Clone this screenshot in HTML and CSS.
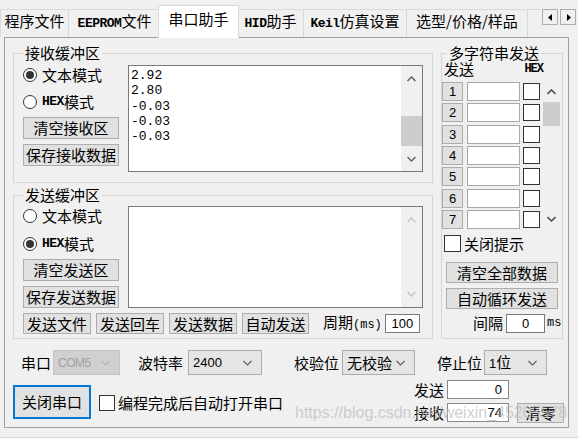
FILE: index.html
```html
<!DOCTYPE html>
<html lang="zh">
<head>
<meta charset="utf-8">
<title>串口助手</title>
<link rel="stylesheet" href="styles.css">
</head>
<body>
<div class="tabstrip">
  <div class="tablist">
    <div class="tab w1">程序文件</div>
    <div class="tab w2"><span class="bm">EEPROM</span>文件</div>
    <div class="tab active w3">串口助手</div>
    <div class="tab w4"><span class="bm">HID</span>助手</div>
    <div class="tab w5"><span class="bm">Keil</span>仿真设置</div>
    <div class="tab w6">选型/价格/样品</div>
    <div class="tab w7">兴趣</div>
  </div>
  <div class="tab-arrows">
    <span class="arr"><svg width="5" height="7" viewBox="0 0 5 7"><polygon points="4,0 4,7 0,3.5" fill="#000"/></svg></span>
    <span class="arr"><svg width="5" height="7" viewBox="0 0 5 7"><polygon points="1,0 1,7 5,3.5" fill="#000"/></svg></span>
  </div>
</div>

<div class="panel">
  <div class="groups">
    <div class="leftcol">
      <fieldset class="grp recv">
        <legend>接收缓冲区</legend>
        <div class="gbody">
          <div class="ctrls">
            <div class="radio on r1"><i></i>文本模式</div>
            <div class="radio r2"><i></i><span class="bm">HEX</span>模式</div>
            <div class="btn side">清空接收区</div>
            <div class="btn side">保存接收数据</div>
          </div>
          <div class="tbox recvbox">
            <div class="ttext">2.92<br>2.80<br>-0.03<br>-0.03<br>-0.03</div>
            <div class="sb">
              <div class="sb-arr"><svg width="9" height="6" viewBox="0 0 9 6"><polyline points="0.5,5 4.5,1 8.5,5" fill="none" stroke="#606060" stroke-width="1.5"/></svg></div>
              <div class="sb-track"><div class="thumb recv-thumb"></div></div>
              <div class="sb-arr"><svg width="9" height="6" viewBox="0 0 9 6"><polyline points="0.5,1 4.5,5 8.5,1" fill="none" stroke="#606060" stroke-width="1.5"/></svg></div>
            </div>
          </div>
        </div>
      </fieldset>

      <fieldset class="grp send">
        <legend>发送缓冲区</legend>
        <div class="gbody">
          <div class="ctrls">
            <div class="radio r1"><i></i>文本模式</div>
            <div class="radio on r2s"><i></i><span class="bm">HEX</span>模式</div>
            <div class="btn side">清空发送区</div>
            <div class="btn side">保存发送数据</div>
          </div>
          <div class="tbox sendbox">
            <div class="ttext"></div>
            <div class="sb">
              <div class="sb-arr"><svg width="9" height="6" viewBox="0 0 9 6"><polyline points="0.5,5 4.5,1 8.5,5" fill="none" stroke="#c4c4c4" stroke-width="1.5"/></svg></div>
              <div class="sb-track"></div>
              <div class="sb-arr"><svg width="9" height="6" viewBox="0 0 9 6"><polyline points="0.5,1 4.5,5 8.5,1" fill="none" stroke="#c4c4c4" stroke-width="1.5"/></svg></div>
            </div>
          </div>
        </div>
        <div class="sendrow">
          <div class="btn sbtn">发送文件</div>
          <div class="btn sbtn">发送回车</div>
          <div class="btn sbtn">发送数据</div>
          <div class="btn sbtn">自动发送</div>
          <span class="period">周期<span class="sm">(ms)</span></span>
          <div class="in period-in">100</div>
        </div>
      </fieldset>
    </div>

    <fieldset class="grp multi">
      <legend>多字符串发送</legend>
      <div class="mhead"><span>发送</span><span class="bm hex">HEX</span></div>
      <div class="mlist">
        <div class="mrows">
          <div class="mrow"><div class="btn num">1</div><div class="in min"></div><div class="cb"></div></div>
          <div class="mrow"><div class="btn num">2</div><div class="in min"></div><div class="cb"></div></div>
          <div class="mrow"><div class="btn num">3</div><div class="in min"></div><div class="cb"></div></div>
          <div class="mrow"><div class="btn num">4</div><div class="in min"></div><div class="cb"></div></div>
          <div class="mrow"><div class="btn num">5</div><div class="in min"></div><div class="cb"></div></div>
          <div class="mrow"><div class="btn num">6</div><div class="in min"></div><div class="cb"></div></div>
          <div class="mrow"><div class="btn num">7</div><div class="in min"></div><div class="cb"></div></div>
        </div>
        <div class="msb">
          <div class="msb-arr"><svg width="9" height="6" viewBox="0 0 9 6"><polyline points="0.5,5 4.5,1 8.5,5" fill="none" stroke="#505050" stroke-width="1.6"/></svg></div>
          <div class="thumb mthumb"></div>
          <div class="msb-fill"></div>
          <div class="msb-arr"><svg width="9" height="6" viewBox="0 0 9 6"><polyline points="0.5,1 4.5,5 8.5,1" fill="none" stroke="#505050" stroke-width="1.6"/></svg></div>
        </div>
      </div>
      <div class="chk mchk"><span class="cb"></span>关闭提示</div>
      <div class="btn mbtn first">清空全部数据</div>
      <div class="btn mbtn">自动循环发送</div>
      <div class="interval"><span class="ilbl">间隔</span><div class="in ival">0</div><span class="sm">ms</span></div>
    </fieldset>
  </div>

  <div class="serial">
    <span class="lbl l1">串口</span>
    <div class="combo dis c1"><span class="cv com">COM5</span><svg width="9" height="6" viewBox="0 0 9 6"><polyline points="0.5,1 4.5,5 8.5,1" fill="none" stroke="#b4b4b4" stroke-width="1.2"/></svg></div>
    <span class="lbl l2">波特率</span>
    <div class="combo c2"><span class="cv num13">2400</span><svg width="9" height="6" viewBox="0 0 9 6"><polyline points="0.5,1 4.5,5 8.5,1" fill="none" stroke="#606060" stroke-width="1.2"/></svg></div>
    <span class="lbl l3">校验位</span>
    <div class="combo c3"><span class="cv">无校验</span><svg width="9" height="6" viewBox="0 0 9 6"><polyline points="0.5,1 4.5,5 8.5,1" fill="none" stroke="#606060" stroke-width="1.2"/></svg></div>
    <span class="lbl l4">停止位</span>
    <div class="combo c4"><span class="cv"><span class="num13">1</span>位</span><svg width="9" height="6" viewBox="0 0 9 6"><polyline points="0.5,1 4.5,5 8.5,1" fill="none" stroke="#606060" stroke-width="1.2"/></svg></div>
  </div>

  <div class="ctl">
    <div class="btn openbtn">关闭串口</div>
    <div class="chk autoopen"><span class="cb"></span>编程完成后自动打开串口</div>
    <div class="counters">
      <span class="clbl">发送</span><div class="in cin">0</div><span></span>
      <span class="clbl">接收</span><div class="in cin">74</div><div class="btn clr">清零</div>
    </div>
  </div>
  <div class="watermark">https://blog.csdn.net/weixin_45205578</div>
</div>
<div class="footer"></div>
</body>
</html>
```

FILE: styles.css
```css
* { box-sizing: border-box; }
html, body { margin: 0; padding: 0; }
body {
  width: 578px;
  height: 439px;
  overflow: hidden;
  background: #f0f0f0;
  font-family: "Noto Sans CJK SC", sans-serif;
  font-size: 15px;
  line-height: 18px;
  color: #000;
}
.bm { font-family: "Liberation Mono", monospace; font-size: 13px; font-weight: bold; letter-spacing: -0.5px; }
.sm { font-family: "Liberation Mono", monospace; font-size: 12px; }
.num13 { font-family: "Liberation Sans", sans-serif; font-size: 13px; }

/* tabs */
.tabstrip { display: flex; height: 38px; position: relative; z-index: 2; }
.tablist { display: flex; align-items: flex-end; width: 540px; height: 38px; overflow: hidden; }
.tab {
  height: 28px;
  margin-bottom: 1px;
  line-height: 22px;
  text-align: center;
  background: #f0f0f0;
  border: 1px solid #d9d9d9;
  border-bottom: none;
  margin-right: -1px;
  white-space: nowrap;
  flex: none;
}
.tab.active {
  height: 33px;
  margin-bottom: 0;
  line-height: 26px;
  background: #fff;
  margin-left: -2px;
  margin-right: -2px;
  position: relative;
  z-index: 1;
}
.w1 { width: 69px; }
.w2 { width: 93px; }
.w3 { width: 81px; }
.w4 { width: 67px; }
.w5 { width: 104px; }
.w6 { width: 122px; }
.w7 { width: 60px; }
.tab-arrows { display: flex; gap: 2px; margin-top: 9px; margin-left: 2px; height: 16px; }
.arr {
  width: 16px; height: 16px;
  border: 1px solid #adadad;
  background: #f0f0f0;
  display: flex; align-items: center; justify-content: center;
}

/* panel */
.panel {
  position: relative;
  z-index: 1;
  margin-top: -1px;
  margin-left: 4px;
  width: 565px;
  height: 391px;
  border: 1px solid #a0a0a0;
  padding: 7px 0 0 8px;
}
.groups { display: flex; gap: 8px; }
.leftcol { display: flex; flex-direction: column; width: 420px; }

fieldset.grp {
  margin: 0;
  padding: 0;
  border: 1px solid #d5d5d5;
  min-width: 0;
}
fieldset.grp legend {
  font-size: 15px;
  line-height: 16px;
  padding: 0 2px;
  margin-left: 0;
}
fieldset.recv { padding: 4px 9px 10px 9px; }
fieldset.send { margin-top: 4px; padding: 3px 9px 4px 9px; }
.gbody { display: flex; }
.ctrls { width: 105px; display: flex; flex-direction: column; }

.radio { display: flex; align-items: center; height: 20px; }
.radio i {
  width: 14px; height: 14px;
  border: 1px solid #333;
  border-radius: 50%;
  background: #fff;
  margin-right: 5px;
  position: relative;
  flex: none;
}
.radio.on i::after {
  content: "";
  position: absolute;
  left: 2px; top: 2px;
  width: 8px; height: 8px;
  border-radius: 50%;
  background: #333;
}
.radio.r2 { margin-top: 7px; }
.radio.r2s { margin-top: 8px; }

.btn {
  background: #e1e1e1;
  border: 1px solid #adadad;
  text-align: center;
  white-space: nowrap;
}
.btn.side { width: 96px; height: 22px; line-height: 20px; margin-top: 5px; }

.tbox {
  width: 295px;
  border: 1px solid #7a7a7a;
  background: #fff;
  display: flex;
}
.recvbox { height: 107px; }
.sendbox { height: 102px; }
.ttext {
  flex: 1;
  padding: 2px 0 0 2px;
  font-family: "Liberation Mono", monospace;
  font-size: 13px;
  line-height: 15.3px;
}
.sb { width: 21px; background: #f0f0f0; display: flex; flex-direction: column; }
.sb-arr { height: 26px; display: flex; align-items: center; justify-content: center; }
.sb-track { flex: 1; }
.thumb { background: #cdcdcd; }
.recv-thumb { margin: 25px 0 0 0; height: 30px; }

.sendrow { display: flex; align-items: center; margin-top: 5px; height: 21px; }
.sbtn { width: 68px; height: 21px; line-height: 19px; margin-right: 5px; }
.sbtn:nth-child(4) { width: 67px; }
.period { margin-left: 9px; white-space: nowrap; }
.in { background: #fff; border: 1px solid #7a7a7a; }
.period-in {
  width: 35px; height: 19px; margin-left: 3px;
  font-family: "Liberation Sans", sans-serif; font-size: 13px; line-height: 17px;
  text-align: center;
}

/* multi */
.multi { width: 122px; }
fieldset.multi legend { margin-left: 5px; }
.mhead {
  display: flex; justify-content: space-between;
  height: 18px; line-height: 16px;
  padding: 0 19px 0 2px;
}
.mhead .hex { font-size: 12px; letter-spacing: -1px; }
.mlist { display: flex; margin-top: 3px; }
.mrows { display: flex; flex-direction: column; gap: 2.33px; width: 101px; }
.mrow { display: flex; align-items: center; height: 19px; }
.btn.num {
  width: 21px; height: 19px;
  font-family: "Liberation Sans", sans-serif; font-size: 13px; line-height: 17px;
  margin-right: 4px;
}
.in.min { width: 53px; height: 19px; border-color: #a8a8a8; margin-right: 3px; }
.cb {
  display: inline-block;
  width: 17px; height: 17px;
  border: 1px solid #333;
  background: #fff;
  flex: none;
}
.msb { width: 17px; display: flex; flex-direction: column; }
.msb-arr { height: 20px; display: flex; align-items: center; justify-content: center; }
.mthumb { height: 24px; }
.msb-fill { flex: 1; }

.chk { display: flex; align-items: center; white-space: nowrap; }
.chk .cb { margin-right: 3px; }
.mchk { margin-top: 6px; height: 18px; padding-left: 2px; }
.mbtn { width: 112px; height: 21px; line-height: 19px; margin: 5px 0 0 4px; }
.mbtn.first { margin-top: 9px; }
.interval {
  display: flex; align-items: center; height: 19px; margin-top: 5px; padding-left: 31px;
  white-space: nowrap;
}
.ilbl { flex: none; }
.ival {
  flex: none;
  width: 39px; height: 19px; margin-left: 3px; margin-right: 2px;
  font-family: "Liberation Sans", sans-serif; font-size: 13px; line-height: 17px; text-align: center;
}

/* serial settings */
.serial { display: flex; align-items: center; height: 25px; margin-top: 11px; padding-left: 8px; }
.lbl { white-space: nowrap; }
.combo {
  height: 25px;
  display: flex; align-items: center; justify-content: space-between;
  padding: 0 9px 0 4px;
  border: 1px solid #acacac;
  background: #e5e5e5;
}
.combo.dis { background: #d0d0d0; border-color: #c4c4c4; }
.com { font-family: "Liberation Sans", sans-serif; font-size: 12px; color: #a0a0a0; letter-spacing: -0.5px; }
.c1 { width: 67px; margin-left: 2px; }
.l2 { margin-left: 18px; }
.c2 { width: 74px; margin-left: 5px; }
.l3 { margin-left: 32px; }
.c3 { width: 73px; margin-left: 3px; }
.l4 { margin-left: 22px; }
.c4 { width: 63px; margin-left: 2px; }

.ctl { display: flex; align-items: flex-start; height: 41px; margin-top: 5px; }
.openbtn {
  width: 78px; height: 34px; margin-top: 5px;
  border: 2px solid #0078d7;
  line-height: 30px;
}
.autoopen { margin-left: 8px; margin-top: 14px; height: 18px; }
.autoopen .cb { width: 16px; height: 16px; }
.counters {
  margin-left: auto;
  margin-right: 4px;
  display: grid;
  grid-template-columns: 30px 62px 52px;
  column-gap: 3px;
  row-gap: 4px;
  grid-auto-rows: 19px;
  align-items: center;
}
.clbl { white-space: nowrap; }
.cin {
  width: 62px; height: 19px;
  border-color: #8a8a8a;
  font-family: "Liberation Sans", sans-serif; font-size: 13px; line-height: 17px;
  text-align: right; padding-right: 6px;
}
.clr { width: 47px; height: 20px; line-height: 18px; margin-left: 5px; }

.watermark {
  position: absolute;
  left: 290px;
  top: 366px;
  font-family: "Liberation Sans", sans-serif;
  font-size: 16px;
  color: rgba(190, 190, 190, 0.75);
  white-space: nowrap;
  pointer-events: none;
}
.footer { margin-top: 9px; height: 10px; border-top: 1px solid #dadada; background: #f7f7f7; }
```
